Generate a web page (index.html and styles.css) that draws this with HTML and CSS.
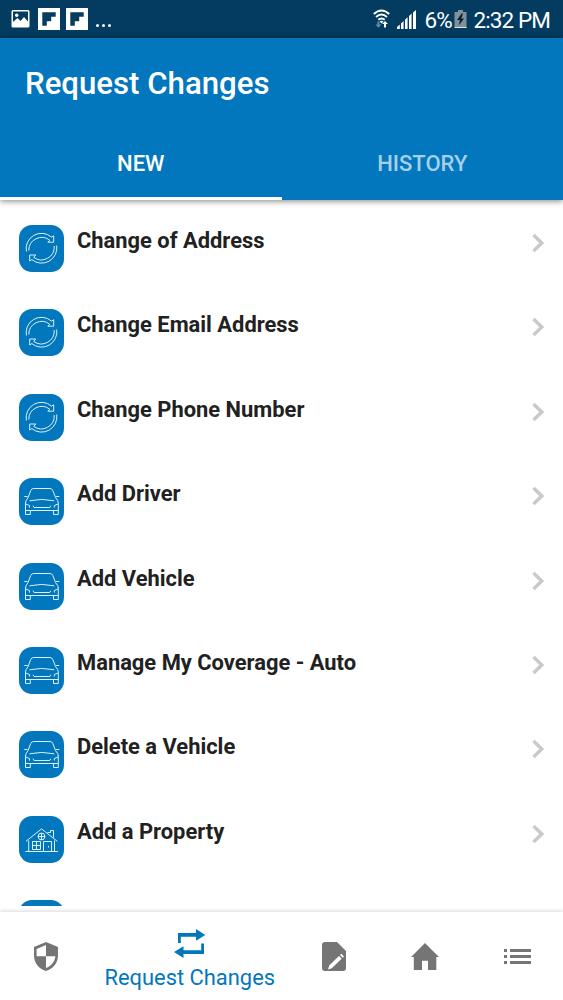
FILE: index.html
```
<!DOCTYPE html>
<html lang="en">
<head>
  <meta charset="UTF-8" />
  <meta name="viewport" content="width=device-width, initial-scale=1" />
  <title>Request Changes</title>
  <link rel="stylesheet" href="styles.css">
</head>
<body>

  <!-- Shared icons -->
  <svg class="sprite" aria-hidden="true">
    <symbol id="icon-refresh" viewBox="0 0 45 47">
      <path d="M7.4 26.5A15.3 15.3 0 0 1 32.5 12.1L34.7 10.8V17.2H28.8L30.8 15.3A12.9 12.9 0 0 0 9.8 25.5" />
      <path d="M37.7 20.5A15.3 15.3 0 0 1 12.8 34.6L10.7 36V30H16.8L14.7 32.4A12.9 12.9 0 0 0 35.2 21" />
    </symbol>
    <symbol id="icon-car" viewBox="0 0 45 47">
      <path d="M9 19.7L11.7 12.5Q12.5 10.5 14.5 10.5H31Q33 10.5 33.8 12.5L36.6 19.7M5.3 18.5H8.6M37 18.5H40.3M9 19.7Q6.5 22.5 6.5 25V36.5H11.3V32.5M36.6 19.7Q39.3 22.5 39.3 25V36.5H34.5V32.5M6.5 32.5H39.3" />
      <path d="M10.5 22.8Q22.8 20 35.2 22.8M6.8 26L10.5 27.5V29.5M39 26L35.3 27.5V29.5M14 27.7L15 29.5H30.8L31.8 27.7" />
    </symbol>
    <symbol id="icon-house" viewBox="0 0 45 47">
      <path d="M7 25.3L22.5 12.9L38.3 25.3M9.7 24.5V35.5M35.5 24.5V35.5M6.3 35.5H38.9M28.5 16.5H31.5V14.5H34.5V21.5M13.5 25.5H21.5V33.5H13.5ZM17.5 25.5V33.5M13.5 29.5H21.5M24.5 35.5V25.5H32.5V35.5M29.5 30V31.5" />
      <circle cx="22.5" cy="20.5" r="3.4" />
      <path d="M22.5 17V24M19 20.5H26" />
    </symbol>
    <symbol id="icon-chevron" viewBox="0 0 12 20">
      <path d="M1.5 2L9.7 10L1.5 18" />
    </symbol>
    <symbol id="icon-flip" viewBox="0 0 22 22">
      <path fill="#fff" d="M0 0H22V22H0Z" />
      <path fill="#073c5e" d="M4.3 4.3H17.7V8.8H13.2V13.2H8.8V17.7H4.3Z" />
    </symbol>
  </svg>

  <div class="screen">
    <!-- Status bar -->
    <div class="status-bar">
      <div class="status-left">
        <svg class="status-photo" viewBox="0 0 18 18"><path fill="#fff" fill-rule="evenodd" d="M1.5 0H16.5Q18 0 18 1.5V16Q18 17.5 16.5 17.5H1.5Q0 17.5 0 16V1.5Q0 0 1.5 0ZM1.5 1.5V12L6 8L9 11L12.5 7L16.5 11.5V1.5Z" /><circle cx="5.2" cy="5.2" r="1.7" fill="#fff" /></svg>
        <svg class="status-flip"><use href="#icon-flip" /></svg>
        <svg class="status-flip"><use href="#icon-flip" /></svg>
        <span class="status-more"><i></i><i></i><i></i></span>
      </div>
      <div class="status-right">
        <svg class="status-wifi" viewBox="0 0 17 20"><path d="M.8 5Q8.5-2 16.2 5M3 8Q8.5 3 14 8M5.3 10.8Q8.5 8 11.7 10.8" fill="none" stroke="#fff" stroke-width="1.9" /><path fill="#fff" d="M6.6 12.4Q8.5 10.9 10.4 12.4L8.5 14.5ZM12 12L15 15H13V18.5H11V15H9Z" /><path fill="#5f8ca8" d="M4.4 12.5H6.4V15.5H8.4L5.4 18.7L2.4 15.5H4.4Z" /></svg>
        <svg class="status-signal" viewBox="0 0 19 19"><path fill="#fff" d="M0 19V17L2.8 14.5V19ZM4 19V13.5L6.6 11V19ZM8 19V9.8L10.6 7.3V19ZM12 19V6L14.6 3.5V19ZM16 19V2.5L19 0V19Z" /></svg>
        <span class="status-battery">6%</span>
        <svg class="status-cell" viewBox="0 0 13 18"><path fill="#80909d" d="M4 0H9V2H12.5V18H.5V2H4Z" /><path fill="#d5e0e7" d="M.5 17H12.5V18H.5Z" /><path fill="#071e2c" d="M7.7 3.5L3 10H6L4.7 15.5L10 8.5H7.2L9 3.5Z" /></svg>
        <span class="status-time">2:32 PM</span>
      </div>
    </div>

    <!-- Header and tabs -->
    <header class="header">
      <h1 class="title">Request Changes</h1>
      <nav class="tabs">
        <a class="tab active">NEW</a>
        <a class="tab">HISTORY</a>
      </nav>
    </header>

    <!-- Request list -->
    <ul class="list">
      <li class="row"><svg class="tile"><use href="#icon-refresh" /></svg><span class="label">Change of Address</span><svg class="chevron"><use href="#icon-chevron" /></svg></li>
      <li class="row"><svg class="tile"><use href="#icon-refresh" /></svg><span class="label">Change Email Address</span><svg class="chevron"><use href="#icon-chevron" /></svg></li>
      <li class="row"><svg class="tile"><use href="#icon-refresh" /></svg><span class="label">Change Phone Number</span><svg class="chevron"><use href="#icon-chevron" /></svg></li>
      <li class="row"><svg class="tile"><use href="#icon-car" /></svg><span class="label">Add Driver</span><svg class="chevron"><use href="#icon-chevron" /></svg></li>
      <li class="row"><svg class="tile"><use href="#icon-car" /></svg><span class="label">Add Vehicle</span><svg class="chevron"><use href="#icon-chevron" /></svg></li>
      <li class="row"><svg class="tile"><use href="#icon-car" /></svg><span class="label">Manage My Coverage - Auto</span><svg class="chevron"><use href="#icon-chevron" /></svg></li>
      <li class="row"><svg class="tile"><use href="#icon-car" /></svg><span class="label">Delete a Vehicle</span><svg class="chevron"><use href="#icon-chevron" /></svg></li>
      <li class="row"><svg class="tile"><use href="#icon-house" /></svg><span class="label">Add a Property</span><svg class="chevron"><use href="#icon-chevron" /></svg></li>
      <li class="row"><svg class="tile"></svg></li>
    </ul>

    <!-- Bottom navigation -->
    <nav class="bottom-nav">
      <a class="nav-item">
        <svg width="24" height="29" viewBox="0 0 24 29"><path fill="#757575" fill-rule="evenodd" d="M12 0L24 5V13.5C24 21 19 27 12 29C5 27 0 21 0 13.5V5ZM12 3L2.6 6.9V14.3H12ZM12 14.3V26C17 24.4 20.8 19.8 21.4 14.3Z" /></svg>
      </a>
      <a class="nav-item active">
        <svg width="32" height="29" viewBox="0 0 32 29"><path fill="#0277bd" d="M4 4H22V0L31.3 6L22 11.7V7.7H6.8V14H4ZM30 14.5V25H9.5V29L0 23L9.5 17.3V21.3H27.2V14.5Z" /></svg>
        <span class="nav-label">Request Changes</span>
      </a>
      <a class="nav-item">
        <svg width="24" height="29" viewBox="0 0 24 29"><path fill="#757575" d="M3 0H15L24 9V26Q24 29 21 29H3Q0 29 0 26V3Q0 0 3 0Z" /><path fill="#fff" d="M6 27.5L7.2 23.5L17 14L19.6 16.8L9.8 26.3ZM18 13L19.3 11.8L22 14.6L20.7 15.8Z" /></svg>
      </a>
      <a class="nav-item">
        <svg width="28" height="27" viewBox="0 0 28 27"><path fill="#757575" d="M14 0L28 14H25.3V27H17V17.7H11V27H2.8V14H0Z" /></svg>
      </a>
      <a class="nav-item">
        <svg width="27" height="15" viewBox="0 0 27 15"><path fill="#757575" d="M0 0H3V3H0ZM6 0H27V3H6ZM0 6H3V9H0ZM6 6H27V9H6ZM0 12H3V15H0ZM6 12H27V15H6Z" /></svg>
      </a>
    </nav>
  </div>

</body>
</html>
```
FILE: styles.css
```
body {
  font-family: Roboto, sans-serif;
  margin: 0;
  background: #fff;
}

svg {
  display: block;
  flex: none;
}

.sprite {
  position: absolute;
  width: 0;
  height: 0;
}

.screen {
  display: flex;
  flex-direction: column;
  width: 563px;
  height: 1000px;
  overflow: hidden;
}

/* Status bar */
.status-bar {
  display: flex;
  flex: none;
  justify-content: space-between;
  height: 38px;
  box-sizing: border-box;
  padding: 0 13px 0 11px;
  background: #033c60;
  color: #fff;
  font-size: 22.5px;
  letter-spacing: -0.9px;
}

.status-left,
.status-right {
  display: flex;
  align-items: center;
}

.status-photo {
  width: 19px;
  height: 18px;
  margin-right: 8px;
}

.status-flip {
  width: 22px;
  height: 22px;
  margin-right: 6px;
}

.status-more {
  display: flex;
  gap: 3px;
  padding: 13px 0 0 2px;
}

.status-more i {
  width: 3px;
  height: 3px;
  border-radius: 50%;
  background: #fff;
}

.status-wifi {
  width: 17px;
  height: 20px;
  margin-right: 7px;
}

.status-signal {
  width: 19px;
  height: 19px;
  margin-right: 8px;
}

.status-battery,
.status-time {
  padding-top: 1px;
  line-height: 38px;
}

.status-battery {
  width: 25px;
}

.status-cell {
  width: 13px;
  height: 18px;
  margin: 0 6px 0 5px;
}

/* Header */
.header {
  display: flex;
  flex: none;
  flex-direction: column;
  justify-content: space-between;
  height: 162px;
  background: #0277bd;
  color: #fff;
  box-shadow: 0 1px 6px rgba(0, 0, 0, 0.5);
  z-index: 1;
}

.title {
  margin: 0;
  padding: 25px 0 0 25px;
  font-size: 31.2px;
  font-weight: 500;
  line-height: 42px;
}

.tabs {
  display: flex;
}

.tab {
  flex: 1;
  height: 72px;
  border-bottom: 3px solid transparent;
  color: #a6cfe8;
  font-size: 22px;
  font-weight: 500;
  line-height: 77px;
  text-align: center;
}

.tab.active {
  border-bottom-color: #fff;
  color: #fff;
}

/* List */
.list {
  flex: none;
  height: 706px;
  box-sizing: border-box;
  margin: 0;
  padding: 6px 19px 0;
  overflow: hidden;
  list-style: none;
}

.row {
  display: flex;
  align-items: flex-start;
  height: 84.4px;
  box-sizing: border-box;
  padding-top: 19px;
}

.tile {
  width: 45px;
  height: 47px;
  border-radius: 13px;
  background: #0277bd;
  fill: none;
  stroke: #d9f1fc;
  stroke-width: 1;
}

.label {
  flex: 1;
  padding-left: 13px;
  color: #212121;
  font-size: 21.9px;
  font-weight: 700;
  line-height: 32.4px;
}

.chevron {
  width: 12px;
  height: 20px;
  margin-top: 8px;
  fill: none;
  stroke: #c9c9c9;
  stroke-width: 3.4;
}

/* Bottom navigation */
.bottom-nav {
  display: flex;
  flex: none;
  height: 88px;
  margin-top: 6px;
  background: #fff;
  box-shadow: 0 -1px 4px rgba(0, 0, 0, 0.15);
}

.nav-item {
  display: flex;
  flex: 1;
  flex-direction: column;
  align-items: center;
  justify-content: center;
}

.nav-item.active {
  flex: none;
  width: 196px;
  box-sizing: border-box;
  justify-content: flex-start;
  padding-top: 17px;
}

.nav-label {
  margin-top: 4px;
  color: #0277bd;
  font-size: 21.9px;
  line-height: 31px;
  white-space: nowrap;
}
```
